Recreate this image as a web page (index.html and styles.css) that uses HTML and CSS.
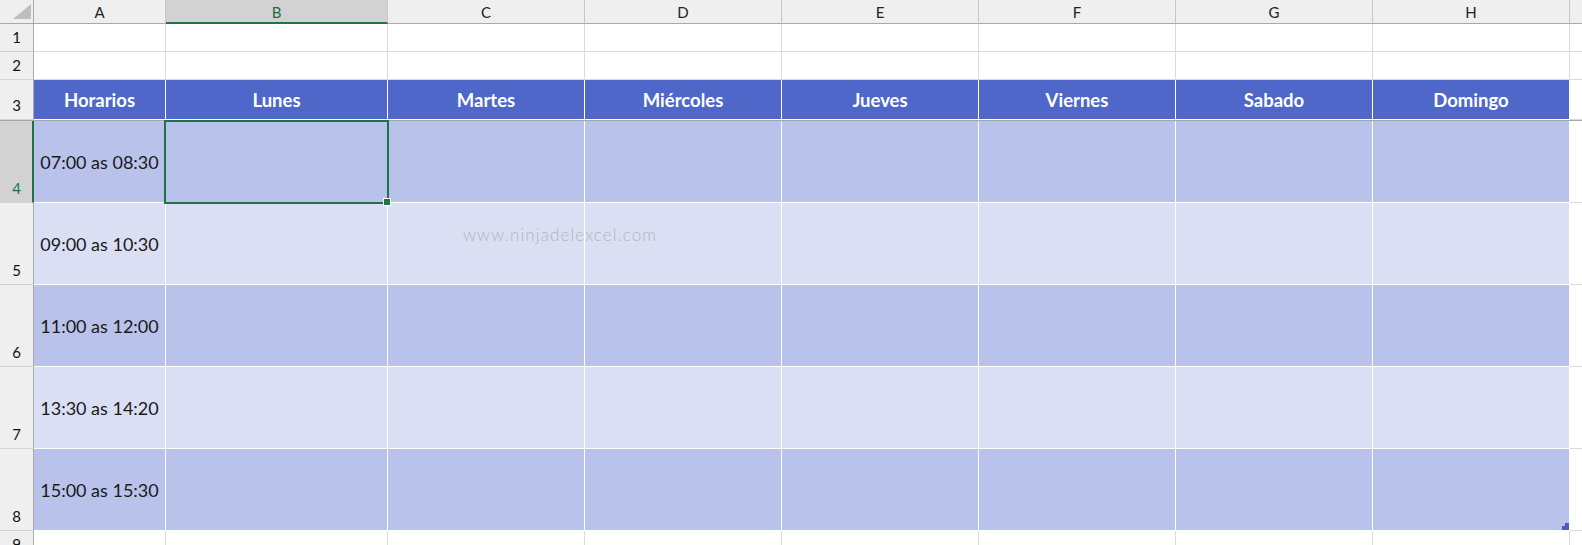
FILE: index.html
```html
<!DOCTYPE html>
<html lang="es">
<head>
<meta charset="utf-8">
<title>Horarios</title>
<link rel="stylesheet" href="styles.css">
</head>
<body>
<div class="sheet">
  <!-- column headers -->
  <div class="corner"><svg class="corner-tri" width="18" height="15" viewBox="0 0 18 15"><polygon points="18,0 18,15 0,15" fill="#bdbdbd"/></svg></div>
  <div class="ch">A</div>
  <div class="ch ch-sel">B</div>
  <div class="ch">C</div>
  <div class="ch">D</div>
  <div class="ch">E</div>
  <div class="ch">F</div>
  <div class="ch">G</div>
  <div class="ch">H</div>
  <div class="ch ch-last"></div>

  <!-- row 1 -->
  <div class="rh">1</div>
  <div class="c"></div><div class="c"></div><div class="c"></div><div class="c"></div><div class="c"></div><div class="c"></div><div class="c"></div><div class="c"></div><div class="c c-last"></div>

  <!-- row 2 -->
  <div class="rh">2</div>
  <div class="c"></div><div class="c"></div><div class="c"></div><div class="c"></div><div class="c"></div><div class="c"></div><div class="c"></div><div class="c"></div><div class="c c-last"></div>

  <!-- row 3 -->
  <div class="rh">3</div>
  <div class="hd">Horarios</div>
  <div class="hd">Lunes</div>
  <div class="hd">Martes</div>
  <div class="hd">Miércoles</div>
  <div class="hd">Jueves</div>
  <div class="hd">Viernes</div>
  <div class="hd">Sabado</div>
  <div class="hd">Domingo</div>
  <div class="c c-last"></div>

  <div class="freeze"></div>

  <!-- row 4 -->
  <div class="rh rh-sel">4</div>
  <div class="t dark">07:00 as 08:30</div>
  <div class="t dark sel"><span class="handle"></span></div>
  <div class="t dark"></div><div class="t dark"></div><div class="t dark"></div><div class="t dark"></div><div class="t dark"></div><div class="t dark"></div>
  <div class="c c-last"></div>

  <!-- row 5 -->
  <div class="rh">5</div>
  <div class="t light">09:00 as 10:30</div>
  <div class="t light"></div><div class="t light"></div><div class="t light"></div><div class="t light"></div><div class="t light"></div><div class="t light"></div><div class="t light"></div>
  <div class="c c-last"></div>

  <!-- row 6 -->
  <div class="rh">6</div>
  <div class="t dark">11:00 as 12:00</div>
  <div class="t dark"></div><div class="t dark"></div><div class="t dark"></div><div class="t dark"></div><div class="t dark"></div><div class="t dark"></div><div class="t dark"></div>
  <div class="c c-last"></div>

  <!-- row 7 -->
  <div class="rh">7</div>
  <div class="t light">13:30 as 14:20</div>
  <div class="t light"></div><div class="t light"></div><div class="t light"></div><div class="t light"></div><div class="t light"></div><div class="t light"></div><div class="t light"></div>
  <div class="c c-last"></div>

  <!-- row 8 -->
  <div class="rh">8</div>
  <div class="t dark">15:00 as 15:30</div>
  <div class="t dark"></div><div class="t dark"></div><div class="t dark"></div><div class="t dark"></div><div class="t dark"></div><div class="t dark"></div>
  <div class="t dark resize"><svg class="resize-mark" width="7" height="7" viewBox="0 0 7 7"><polygon points="3,0 7,0 7,7 0,7 0,3 3,3" fill="#4a5cc4"/></svg></div>
  <div class="c c-last"></div>

  <!-- row 9 -->
  <div class="rh">9</div>
  <div class="c"></div><div class="c"></div><div class="c"></div><div class="c"></div><div class="c"></div><div class="c"></div><div class="c"></div><div class="c"></div><div class="c c-last"></div>

  <div class="watermark">www.ninjadelexcel.com</div>
</div>
</body>
</html>
```

FILE: styles.css
```css
html, body {
  margin: 0;
  padding: 0;
  background: #ffffff;
}

body {
  width: 1582px;
  height: 545px;
  overflow: hidden;
  font-family: "Lato", "Noto Sans", sans-serif;
}

.sheet {
  position: relative;
  display: grid;
  grid-template-columns: 34px 132px 222px repeat(6, 197px) 1fr;
  grid-template-rows: 24px 28px 28px 40px 1px repeat(5, 82px) 28px;
  width: 1582px;
}

.sheet > div {
  box-sizing: border-box;
}

/* corner */
.corner {
  background: #efefef;
  border-right: 1px solid #a9a9a9;
  border-bottom: 1px solid #a9a9a9;
  display: flex;
  align-items: flex-end;
  justify-content: flex-end;
  padding: 0 2px 4px 0;
}

.corner-tri {
  display: block;
}

/* column headers */
.ch {
  background: #efefef;
  border-right: 1px solid #c8c8c8;
  border-bottom: 1px solid #a9a9a9;
  display: flex;
  align-items: center;
  justify-content: center;
  font-size: 15px;
  color: #222222;
  padding-top: 1px;
}

.ch-sel {
  background: #d2d2d2;
  color: #1e6b42;
  border-bottom: 2px solid #217346;
}

.ch-last {
  border-right: none;
}

/* row headers */
.rh {
  background: #efefef;
  border-right: 1px solid #a9a9a9;
  border-bottom: 1px solid #d4d4d4;
  display: flex;
  align-items: flex-end;
  justify-content: center;
  font-size: 15px;
  color: #111111;
  padding-bottom: 5px;
  line-height: 18px;
}

.rh-sel {
  background: #d2d2d2;
  color: #217346;
  border-right: 2px solid #217346;
  padding-left: 1px;
}

/* plain cells */
.c {
  border-right: 1px solid #dadada;
  border-bottom: 1px solid #dadada;
}

.c-last {
  border-right: none;
}

/* header row (table header) */
.hd {
  background: #4f67c8;
  color: #ffffff;
  font-weight: 700;
  font-size: 18.5px;
  border-right: 1px solid #ffffff;
  border-bottom: 1px solid #ffffff;
  display: flex;
  align-items: center;
  justify-content: center;
  padding-top: 1px;
}

/* frozen pane line */
.freeze {
  grid-column: 1 / -1;
  background: #a6a6a6;
}

/* table body cells */
.t {
  border-right: 1px solid #ffffff;
  border-bottom: 1px solid #ffffff;
  display: flex;
  align-items: center;
  justify-content: center;
  font-size: 18px;
  color: #1a1a1a;
}

.dark {
  background: #b8c2eb;
}

.light {
  background: #dadff4;
}

/* selected cell */
.sel {
  position: relative;
}

.sel::after {
  content: "";
  position: absolute;
  top: -1px;
  left: -2px;
  right: -2px;
  bottom: -2px;
  border: 2px solid #217346;
  pointer-events: none;
}

.handle {
  position: absolute;
  left: 218px;
  top: 78px;
  width: 6px;
  height: 6px;
  background: #217346;
  box-shadow: 0 0 0 1px #ffffff;
  z-index: 2;
}

/* table resize mark */
.resize {
  position: relative;
}

.resize-mark {
  position: absolute;
  right: 0;
  bottom: 0;
  display: block;
}

/* watermark */
.watermark {
  position: absolute;
  left: 463px;
  top: 224px;
  font-size: 17px;
  font-weight: 300;
  color: #b6b6bb;
  letter-spacing: 1.1px;
  pointer-events: none;
}
```
